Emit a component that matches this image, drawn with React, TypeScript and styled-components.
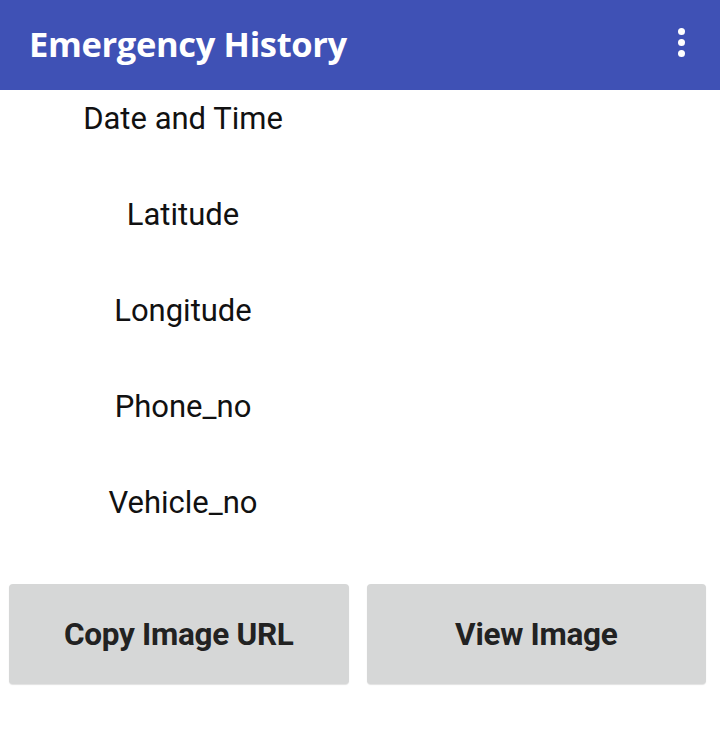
import React from "react";
import styled, { createGlobalStyle } from "styled-components";

const Global = createGlobalStyle`
  html, body { margin: 0; padding: 0; background: #ffffff; }
  body { font-family: Roboto, "Noto Sans", sans-serif; }
`;

const Page = styled.div`
  width: 720px;
  height: 739px;
  background: #ffffff;
  display: flex;
  flex-direction: column;
`;

const AppBar = styled.header`
  height: 90px;
  background: #3f51b5;
  display: flex;
  align-items: center;
  justify-content: space-between;
  padding: 0 25px 0 29px;
  box-sizing: border-box;
`;

const Title = styled.h1`
  margin: 0;
  color: #ffffff;
  font-family: "Open Sans", sans-serif;
  font-weight: 700;
  font-size: 34.5px;
  letter-spacing: -0.35px;
  position: relative;
  top: -2px;
`;

const MenuButton = styled.div`
  width: 28px;
  display: flex;
  flex-direction: column;
  align-items: center;
  gap: 4px;
  position: relative;
  top: -3px;
`;

const Dot = styled.span`
  width: 7px;
  height: 7px;
  border-radius: 50%;
  background: #ffffff;
`;

const Fields = styled.div`
  width: 366px;
  display: flex;
  flex-direction: column;
  gap: 40px;
`;

const Field = styled.div`
  height: 56px;
  display: flex;
  align-items: center;
  justify-content: center;
  font-family: Roboto, sans-serif;
  font-size: 31px;
  color: #111111;
`;

const Actions = styled.div`
  margin-top: 54px;
  padding: 0 14px 0 9px;
  display: grid;
  grid-template-columns: 1fr 1fr;
  gap: 18px;
`;

const ActionButton = styled.button`
  height: 100px;
  border: none;
  border-radius: 4px;
  background: #d6d7d7;
  box-shadow: 0 1px 1px rgba(0, 0, 0, 0.12);
  font-family: Roboto, sans-serif;
  font-weight: 700;
  font-size: 31.5px;
  color: #222222;
  letter-spacing: -0.3px;
  padding: 0;
`;

export default function App() {
  const fields = ["Date and Time", "Latitude", "Longitude", "Phone_no", "Vehicle_no"];
  return (
    <>
      <Global />
      <Page>
        <AppBar>
          <Title>Emergency History</Title>
          <MenuButton>
            <Dot />
            <Dot />
            <Dot />
          </MenuButton>
        </AppBar>
        <Fields>
          {fields.map((f) => (
            <Field key={f}>{f}</Field>
          ))}
        </Fields>
        <Actions>
          <ActionButton>Copy Image URL</ActionButton>
          <ActionButton>View Image</ActionButton>
        </Actions>
      </Page>
    </>
  );
}
